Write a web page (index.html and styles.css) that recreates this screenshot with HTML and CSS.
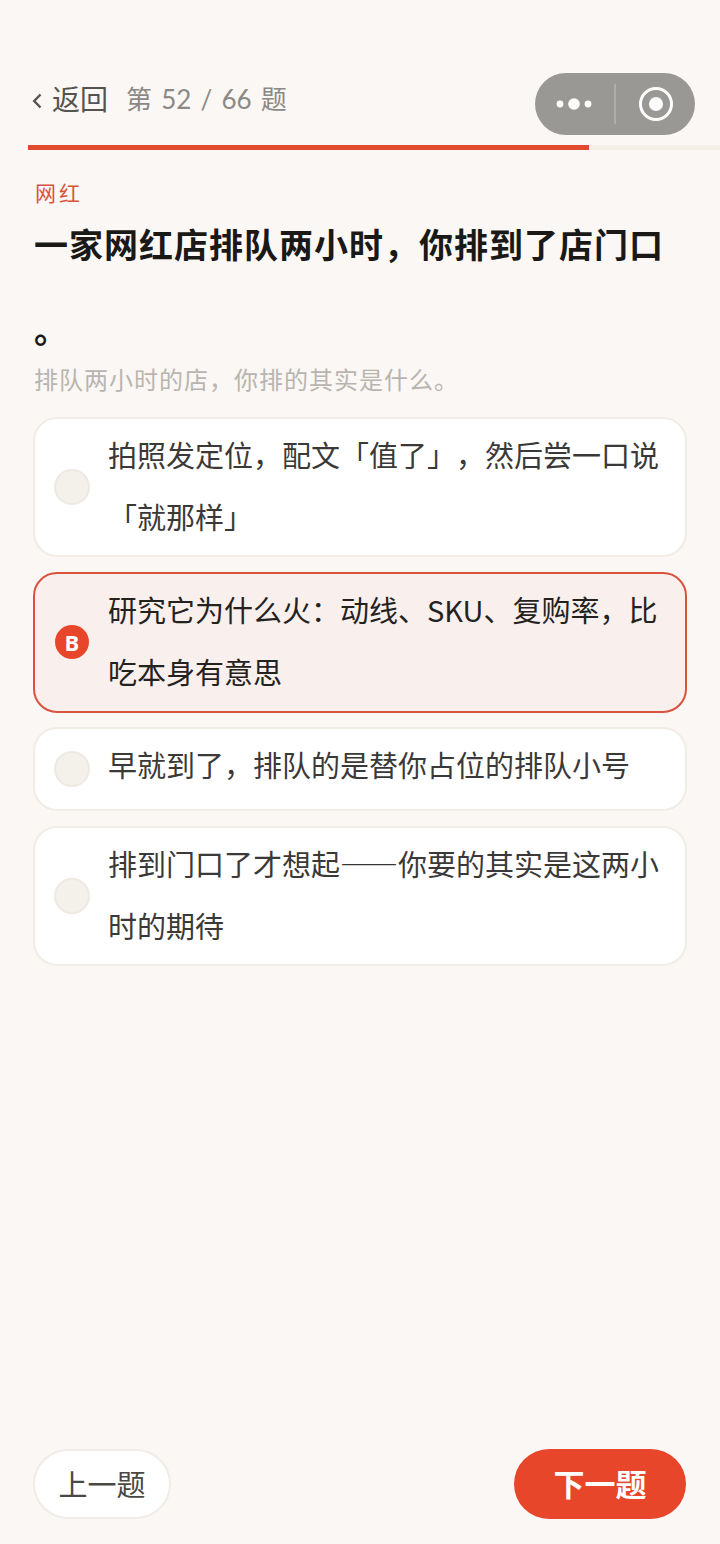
FILE: index.html
```html
<!DOCTYPE html>
<html lang="zh">
<head>
<meta charset="utf-8">
<title>题目</title>
<link rel="stylesheet" href="styles.css">
</head>
<body>
<div class="page">
  <header class="top">
    <div class="nav">
      <span class="back"><svg class="chev" width="10" height="16" viewBox="0 0 10 16"><path d="M8.5 1.5 2.2 8l6.3 6.5" fill="none" stroke="#555350" stroke-width="2.4"/></svg>返回</span>
      <span class="count">第 52 / 66 题</span>
    </div>
    <div class="capsule">
      <svg class="dots" width="36" height="14" viewBox="0 0 36 14"><circle cx="4" cy="7" r="3.4" fill="#fff"/><circle cx="18" cy="7" r="5.8" fill="#fff"/><circle cx="32" cy="7" r="3.4" fill="#fff"/></svg>
      <span class="sep"></span>
      <svg class="target" width="36" height="36" viewBox="0 0 36 36"><circle cx="18" cy="18" r="15.5" fill="none" stroke="#fff" stroke-width="3"/><circle cx="18" cy="18" r="7" fill="#fff"/></svg>
    </div>
  </header>
  <div class="track"><div class="fill"></div></div>
  <section class="head">
    <div class="tag">网红</div>
    <h1 class="title">一家网红店排队两小时，你排到了店门口。</h1>
    <p class="sub">排队两小时的店，你排的其实是什么。</p>
  </section>
  <section class="options">
    <div class="opt"><span class="mark"></span><span class="txt">拍照发定位，配文「值了」，然后尝一口说「就那样」</span></div>
    <div class="opt on"><span class="mark">B</span><span class="txt">研究它为什么火：动线、SKU、复购率，比吃本身有意思</span></div>
    <div class="opt"><span class="mark"></span><span class="txt">早就到了，排队的是替你占位的排队小号</span></div>
    <div class="opt"><span class="mark"></span><span class="txt">排到门口了才想起——你要的其实是这两小时的期待</span></div>
  </section>
  <footer class="foot">
    <div class="btn prev">上一题</div>
    <div class="btn next">下一题</div>
  </footer>
</div>
</body>
</html>
```
FILE: styles.css
```css
* { box-sizing: border-box; }
html, body { margin: 0; padding: 0; }
body {
  background: #fbf7f4;
  font-family: "Lato", "Noto Sans CJK SC", sans-serif;
  color: #2a2826;
  text-spacing-trim: space-all;
}
.page {
  width: 720px;
  height: 1544px;
  display: flex;
  flex-direction: column;
}
.top {
  height: 145px;
  padding: 73px 25px 0 32px;
  display: flex;
  justify-content: space-between;
  align-items: flex-start;
}
.nav {
  display: flex;
  align-items: center;
  height: 50px;
}
.back {
  display: flex;
  align-items: center;
  font-size: 28px;
  color: #555350;
  gap: 10px;
}
.chev { margin-top: 6px; }
.count {
  margin-left: 18px;
  margin-bottom: 2px;
  font-size: 26px;
  color: #8b8985;
  word-spacing: 2.5px;
}
.capsule {
  width: 160px;
  height: 62px;
  border-radius: 31px;
  background: #9a9894;
  display: flex;
  align-items: center;
  padding: 0 21px;
}
.dots { flex: none; }
.sep {
  width: 2px;
  height: 40px;
  background: #b0aeaa;
  margin: 0 22px 0 22px;
}
.track {
  margin-left: 28px;
  height: 5px;
  background: #f3eee8;
  flex: none;
}
.fill {
  width: 561px;
  height: 5px;
  background: #e04a2e;
}
.head { padding: 34px 35px 0 34px; }
.tag {
  font-size: 21px;
  line-height: 18px;
  letter-spacing: 3px;
  color: #d9533c;
  padding-left: 1px;
}
.title {
  margin: 0;
  font-size: 34px;
  line-height: 85px;
  letter-spacing: 1px;
  font-weight: 700;
  color: #1a1917;
  line-break: anywhere;
}
.sub {
  margin: -9px 0 0;
  font-size: 24px;
  line-height: 34px;
  letter-spacing: 1px;
  color: #b8b5b0;
}
.options {
  margin-top: 20px;
  padding: 0 33px;
  display: flex;
  flex-direction: column;
  gap: 14.5px;
}
.opt {
  display: flex;
  align-items: center;
  gap: 18px;
  min-height: 84px;
  padding: 4px 19px 8px;
  background: #fff;
  border: 2px solid #f1ece5;
  border-radius: 24px;
}
.opt.on {
  background: #f9efec;
  border-color: #d9533c;
  padding-bottom: 9px;
}
.mark {
  flex: none;
  width: 36px;
  height: 36px;
  margin-top: 4px;
  border-radius: 50%;
  background: #f4f1eb;
  border: 2px solid #eeeae3;
  display: flex;
  align-items: center;
  justify-content: center;
  font-family: "Open Sans", sans-serif;
  font-size: 22px;
  font-weight: 700;
  color: #fff;
}
.on .mark {
  width: 34px;
  height: 34px;
  margin: 5px 1px 0;
  background: #e8462a;
  border: 0;
}
.txt {
  align-self: flex-start;
  font-family: "Noto Sans CJK SC", sans-serif;
  font-size: 29px;
  line-height: 62px;
  color: #3b3937;
}
.on .txt { color: #24221f; }
.foot {
  margin-top: auto;
  padding: 0 34px 25px 33px;
  display: flex;
  justify-content: space-between;
}
.btn {
  height: 70px;
  border-radius: 35px;
  display: flex;
  align-items: center;
  justify-content: center;
  padding-bottom: 3px;
  font-size: 29px;
}
.prev {
  width: 138px;
  background: #fff;
  border: 2px solid #f1ece5;
  color: #4a4845;
}
.next {
  width: 172px;
  background: #e8462a;
  color: #fff;
  font-size: 31px;
  font-weight: 700;
}
```
